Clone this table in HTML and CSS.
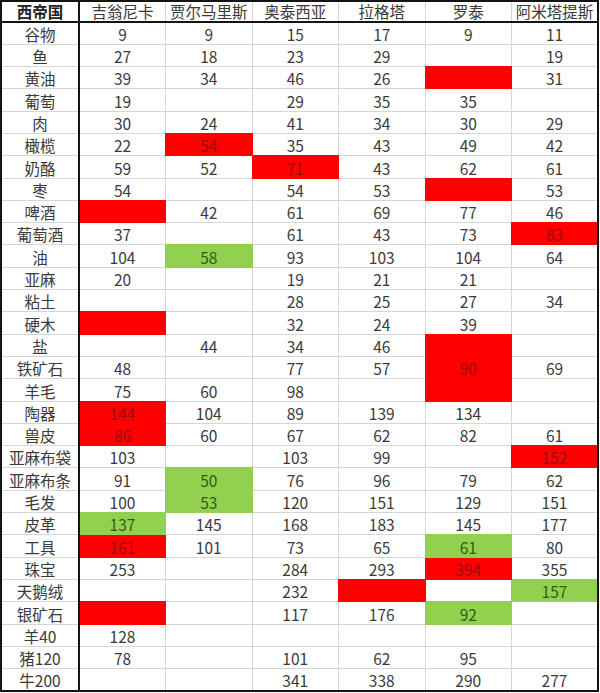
FILE: index.html
```html
<!DOCTYPE html>
<html lang="zh-CN">
<head>
<meta charset="utf-8">
<title>西帝国</title>
<link rel="stylesheet" href="styles.css">
</head>
<body>
<table class="sheet">
  <colgroup>
    <col class="c-name">
    <col class="c-val"><col class="c-val"><col class="c-val"><col class="c-val"><col class="c-val"><col class="c-val">
  </colgroup>
  <thead>
    <tr><th class="name title">西帝国</th><th>吉翁尼卡</th><th>贾尔马里斯</th><th>奥泰西亚</th><th>拉格塔</th><th>罗泰</th><th>阿米塔提斯</th></tr>
  </thead>
  <tbody>
    <tr><td class="name">谷物</td><td>9</td><td>9</td><td>15</td><td>17</td><td>9</td><td>11</td></tr>
    <tr><td class="name">鱼</td><td>27</td><td>18</td><td>23</td><td>29</td><td></td><td>19</td></tr>
    <tr><td class="name">黄油</td><td>39</td><td>34</td><td>46</td><td>26</td><td class="r"></td><td>31</td></tr>
    <tr><td class="name">葡萄</td><td>19</td><td></td><td>29</td><td>35</td><td>35</td><td></td></tr>
    <tr><td class="name">肉</td><td>30</td><td>24</td><td>41</td><td>34</td><td>30</td><td>29</td></tr>
    <tr><td class="name">橄榄</td><td>22</td><td class="r">54</td><td>35</td><td>43</td><td>49</td><td>42</td></tr>
    <tr><td class="name">奶酪</td><td>59</td><td>52</td><td class="r">71</td><td>43</td><td>62</td><td>61</td></tr>
    <tr><td class="name">枣</td><td>54</td><td></td><td>54</td><td>53</td><td class="r"></td><td>53</td></tr>
    <tr><td class="name">啤酒</td><td class="r"></td><td>42</td><td>61</td><td>69</td><td>77</td><td>46</td></tr>
    <tr><td class="name">葡萄酒</td><td>37</td><td></td><td>61</td><td>43</td><td>73</td><td class="r">83</td></tr>
    <tr><td class="name">油</td><td>104</td><td class="g">58</td><td>93</td><td>103</td><td>104</td><td>64</td></tr>
    <tr><td class="name">亚麻</td><td>20</td><td></td><td>19</td><td>21</td><td>21</td><td></td></tr>
    <tr><td class="name">粘土</td><td></td><td></td><td>28</td><td>25</td><td>27</td><td>34</td></tr>
    <tr><td class="name">硬木</td><td class="r"></td><td></td><td>32</td><td>24</td><td>39</td><td></td></tr>
    <tr><td class="name">盐</td><td></td><td>44</td><td>34</td><td>46</td><td class="r"></td><td></td></tr>
    <tr><td class="name">铁矿石</td><td>48</td><td></td><td>77</td><td>57</td><td class="r">90</td><td>69</td></tr>
    <tr><td class="name">羊毛</td><td>75</td><td>60</td><td>98</td><td></td><td class="r"></td><td></td></tr>
    <tr><td class="name">陶器</td><td class="r">144</td><td>104</td><td>89</td><td>139</td><td>134</td><td></td></tr>
    <tr><td class="name">兽皮</td><td class="r">86</td><td>60</td><td>67</td><td>62</td><td>82</td><td>61</td></tr>
    <tr><td class="name">亚麻布袋</td><td>103</td><td></td><td>103</td><td>99</td><td></td><td class="r">152</td></tr>
    <tr><td class="name">亚麻布条</td><td>91</td><td class="g">50</td><td>76</td><td>96</td><td>79</td><td>62</td></tr>
    <tr><td class="name">毛发</td><td>100</td><td class="g">53</td><td>120</td><td>151</td><td>129</td><td>151</td></tr>
    <tr><td class="name">皮革</td><td class="g">137</td><td>145</td><td>168</td><td>183</td><td>145</td><td>177</td></tr>
    <tr><td class="name">工具</td><td class="r">161</td><td>101</td><td>73</td><td>65</td><td class="g">61</td><td>80</td></tr>
    <tr><td class="name">珠宝</td><td>253</td><td></td><td>284</td><td>293</td><td class="r">394</td><td>355</td></tr>
    <tr><td class="name">天鹅绒</td><td></td><td></td><td>232</td><td class="r"></td><td></td><td class="g">157</td></tr>
    <tr><td class="name">银矿石</td><td class="r"></td><td></td><td>117</td><td>176</td><td class="g">92</td><td></td></tr>
    <tr><td class="name">羊40</td><td>128</td><td></td><td></td><td></td><td></td><td></td></tr>
    <tr><td class="name">猪120</td><td>78</td><td></td><td>101</td><td>62</td><td>95</td><td></td></tr>
    <tr><td class="name">牛200</td><td></td><td></td><td>341</td><td>338</td><td>290</td><td>277</td></tr>
  </tbody>
</table>
</body>
</html>
```

FILE: styles.css
```css
html, body {
  margin: 0;
  padding: 0;
  background: #ffffff;
}

body {
  font-family: "Noto Sans CJK SC", "Noto Sans", sans-serif;
}

.sheet {
  border-collapse: collapse;
  table-layout: fixed;
  width: 599px;
  border: 2px solid #141414;
  font-size: 15.5px;
  color: #3a3a3a;
}

.c-name { width: 78px; }
.c-val { width: 86.5px; }

.sheet th,
.sheet td {
  border: 1px solid #d6d6d6;
  padding: 0 0 1px;
  text-align: center;
  vertical-align: bottom;
  line-height: 18px;
  white-space: nowrap;
  overflow: hidden;
  font-weight: 400;
}

.sheet thead tr { height: 21px; }
.sheet tbody tr { height: 22.3px; }

.sheet thead th {
  border-bottom: 2px solid #141414;
  line-height: 19px;
  padding: 0;
}

.sheet .name { border-right: 2px solid #141414; }
.sheet .title { font-weight: 700; color: #222222; }

.sheet .r {
  background: #ff0000;
  border: 1px double #ff0000;
  color: #9a0b0b;
}

.sheet .g {
  background: #92d050;
  border: 1px double #92d050;
  color: #345a17;
}
```
